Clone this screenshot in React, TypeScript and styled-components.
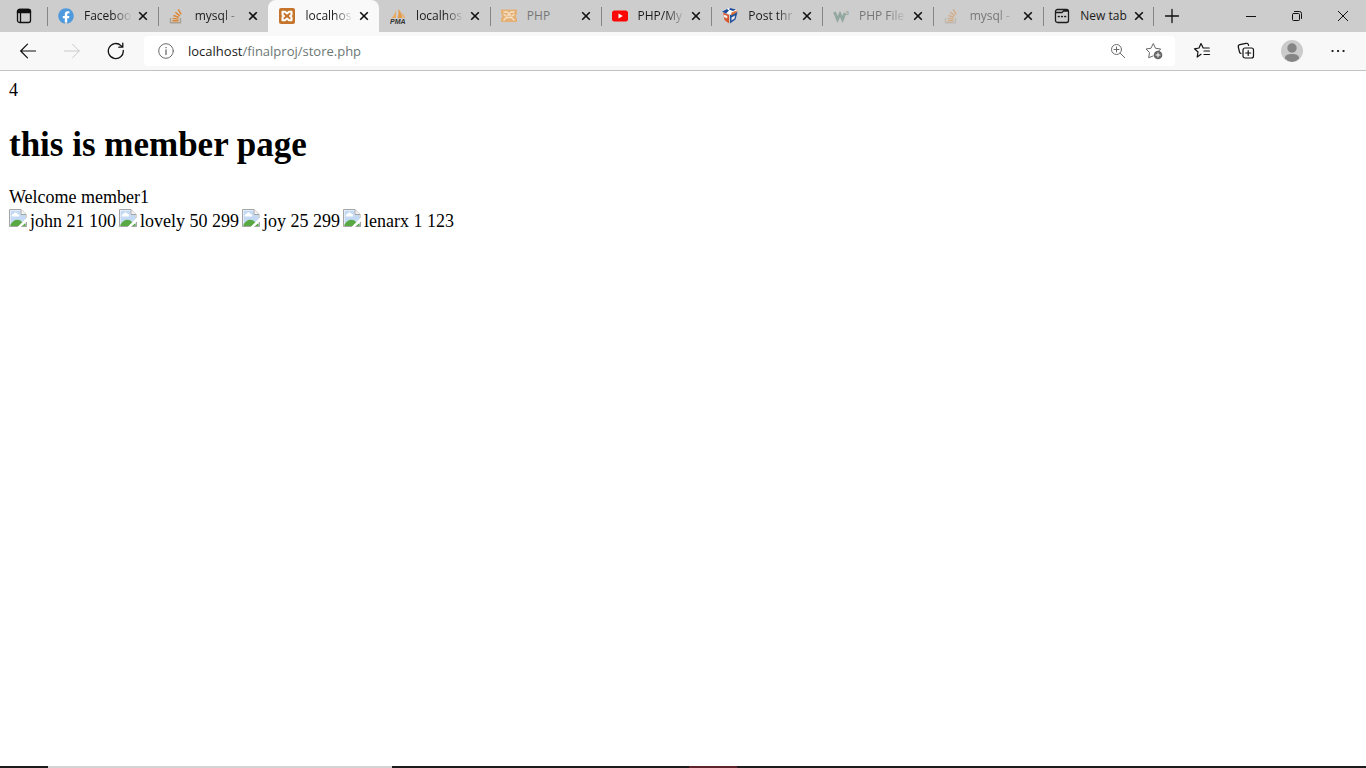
import React from "react";
import styled, { createGlobalStyle } from "styled-components";
import { FaFacebook } from "react-icons/fa";

const GlobalStyle = createGlobalStyle`
  * { box-sizing: border-box; }
  body { margin: 0; background: #fff; }
`;

const UI_FONT = `"Open Sans", "Noto Sans", sans-serif`;

const Window = styled.div`
  display: flex;
  flex-direction: column;
  min-height: 100vh;
  font-family: ${UI_FONT};
`;

const IconButton = styled.button<{ $width?: number; $color?: string }>`
  display: flex;
  align-items: center;
  justify-content: center;
  flex: none;
  width: ${(p) => p.$width ?? 44}px;
  height: 32px;
  padding: 0;
  border: 0;
  background: none;
  color: ${(p) => p.$color ?? "#111"};
  svg { display: block; }
`;

const TabBar = styled.header`
  display: flex;
  height: 32px;
  background: #cdcdcd;
`;

const TabList = styled.nav`
  display: flex;
  flex: 0 1 1107px;
  min-width: 0;
`;

const Tab = styled.div<{ $active?: boolean; $divider?: boolean }>`
  position: relative;
  display: flex;
  align-items: center;
  flex: 1 1 0;
  min-width: 0;
  padding: 0 10px 0 11px;
  border-radius: 8px 8px 0 0;
  background: ${(p) => (p.$active ? "#f9f9f9" : "transparent")};
  &::before,
  &:last-child::after {
    content: "";
    position: absolute;
    left: 0;
    top: 7px;
    width: 1px;
    height: 19px;
    background: ${(p) => (p.$divider ? "#858585" : "transparent")};
  }
  &:last-child::after {
    left: auto;
    right: 0;
  }
`;

const TabLink = styled.a<{ $dim?: boolean }>`
  display: flex;
  align-items: center;
  flex: 1;
  min-width: 0;
  gap: 10px;
  color: ${(p) => (p.$dim ? "#777" : "#1b1b1b")};
  font-size: 12px;
  line-height: 16px;
  text-decoration: none;
  svg { flex: none; display: block; }
`;

const TabTitle = styled.span<{ $fade: boolean }>`
  flex: 1;
  min-width: 0;
  margin-right: 6px;
  white-space: nowrap;
  mask-image: ${(p) => (p.$fade ? "linear-gradient(to right, #000 60%, transparent)" : "none")};
`;

const Spacer = styled.div`
  flex: 1;
`;

const Toolbar = styled.div`
  display: flex;
  align-items: center;
  height: 39px;
  padding: 0 6px;
  background: #f8f8f8;
  border-bottom: 1px solid #c2c2c2;
`;

const AddressBar = styled.div`
  display: flex;
  align-items: center;
  flex: 1;
  height: 30px;
  margin: 0 5px 0 6px;
  padding: 0 3px 0 0;
  border-radius: 4px;
  background: #fff;
`;

const Url = styled.label`
  position: relative;
  display: flex;
  flex: 1;
  min-width: 0;
  color: #6c7774;
  font-size: 13px;
  line-height: 20px;
  strong { color: #1b1b1b; font-weight: 400; }
`;

const UrlInput = styled.input`
  position: absolute;
  inset: 0;
  width: 100%;
  padding: 0;
  border: 0;
  outline: 0;
  background: transparent;
  font: inherit;
`;

const Page = styled.main`
  flex: 1;
  padding: 9px;
  color: #000;
  font: 18px/21px "Liberation Serif", "Times New Roman", serif;
`;

const Title = styled.h1`
  margin: 24px 0 22px;
  font-size: 35px;
  line-height: 40px;
`;

const Products = styled.div`
  display: flex;
  flex-wrap: wrap;
  gap: 3px;
  margin-top: 1px;
`;

const Product = styled.span`
  display: flex;
  align-items: flex-start;
  gap: 3px;
  line-height: 24px;
`;

const Taskbar = styled.footer`
  display: flex;
  height: 2px;
  background: #1e1b1c;
`;

const TaskSegment = styled.div<{ $width: number; $color: string }>`
  flex: none;
  width: ${(p) => p.$width}px;
  background: ${(p) => p.$color};
`;

type DrawProps = { size?: number; width?: number; children: React.ReactNode };
const Draw = ({ size = 16, width = 1, children }: DrawProps) => (
  <svg width={size} height={size} viewBox={`0 0 ${size} ${size}`} fill="none" stroke="currentColor"
    strokeWidth={width} strokeLinecap="round" strokeLinejoin="round" aria-hidden="true">{children}</svg>
);

const CloseIcon = () => (
  <Draw size={10} width={1.6}><path d="M1.2 1.2 8.8 8.8M8.8 1.2 1.2 8.8" strokeLinecap="butt" /></Draw>
);

const XamppIcon = () => (
  <Draw>
    <rect width="16" height="16" rx="2" fill="#c4752b" stroke="none" />
    <path d="M3.500 3.800h2.500L8 5.500l2-1.700h2.500v3L11 8l1.500 1.200v3H10L8 10.500l-2 1.700H3.500v-3L5 8 3.500 6.800Z" stroke="#fff" strokeWidth="2" />
  </Draw>
);

const PmaIcon = () => (
  <Draw>
    <path d="M6 2v8H1.500C3.500 8.500 5 5.500 6 2Z" fill="#e9aa62" stroke="none" />
    <path d="M8 1c3 2 4 5.500 4 9H7.500C8.700 7 9 4 8 1Z" fill="#e39b48" stroke="none" />
    <path d="M12 5c1.800 1.200 2.700 3 3 5h-2.500Z" fill="#e9b277" stroke="none" />
    <text x="0" y="15.500" fill="#333" stroke="none" fontFamily="Liberation Sans, sans-serif" fontSize="7" fontWeight="700" fontStyle="italic">PMA</text>
  </Draw>
);

const PhpIcon = () => (
  <Draw>
    <path d="M0 1.500h16v5h-1v3h1v4.500H0V9.500h1v-3H0Z" fill="#e5b075" stroke="none" />
    <path d="M3 4h3l2 1.500L10 4h3M3 6.500l2 1.500M13 6.500 11 8M3 12l2.500-2.500h5L13 12M6.500 7h3" stroke="#f6e2c8" strokeWidth="1.300" />
  </Draw>
);

const YoutubeIcon = () => (
  <Draw>
    <rect x="0" y="2.500" width="16" height="11" rx="2.500" fill="#fb0505" stroke="none" />
    <path d="M6.500 5.500v5L10.800 8Z" fill="#fff" stroke="none" />
  </Draw>
);

const CubeIcon = () => (
  <Draw>
    <path d="m1 4.500 6 2.500v8.500L2.500 12Z" fill="#d9562d" stroke="none" />
    <path d="m8 7 7.500-3L13.500 11.500 8 15.500Z" fill="#21529c" stroke="none" />
    <path d="m0 3 7-3 9 2L8.500 6.500Z" fill="#fff" stroke="none" />
    <path d="m0 3.500 5-2.500 2 1.500L4 5.500ZM8 0l6 1.500-3 1.500-4-1.500Z" fill="#1b4b98" stroke="none" />
    <path d="m9.500 4.500 6.500-2.500-3 3.500-4 2Z" fill="#df7133" stroke="none" />
    <path d="m1.500 6.500 4 1.500-.5 2.500-3-1.500ZM9.500 9.500l3.500-2-.5 3-3 2Z" fill="#f3eee9" stroke="none" />
  </Draw>
);

const W3Icon = () => (
  <Draw>
    <path d="m1.500 4 3 7.500L7 6l2.500 5.500L12 5" stroke="#92a7a0" strokeWidth="2.700" strokeLinejoin="miter" strokeLinecap="butt" />
    <text x="12.500" y="7" fill="#92a7a0" stroke="none" fontFamily="Liberation Sans, sans-serif" fontSize="6" fontWeight="700">3</text>
  </Draw>
);

const StackIcon = ({ dim }: { dim?: boolean }) => (
  <Draw width={1.4}>
    <g opacity={dim ? 0.45 : 1} strokeLinecap="butt">
      <path d="M1.500 10v4.800h10V10" stroke="#aaa08f" />
      <path d="M3.500 12.800h6M3.600 10.400l6 .7M4.500 7.500l5.500 1.900M6.400 4.200l4.500 3.700M9.200 1.300l3 5" stroke="#dd8533" />
    </g>
  </Draw>
);

const FacebookDisc = styled.span`
  display: flex;
  border-radius: 50%;
  background: radial-gradient(#fff 50%, transparent 55%);
`;

const FacebookIcon = () => <FacebookDisc><FaFacebook size={16} color="#4f9add" /></FacebookDisc>;

const NewTabIcon = () => (
  <Draw width={1.3}>
    <path d="M1.500 4V3.500a2 2 0 0 1 2-2h9a2 2 0 0 1 2 2v9a2 2 0 0 1-2 2h-9a2 2 0 0 1-2-2ZM1.500 4.500H8L9.500 3H14" />
    <path d="M4.500 8.500h.6M7.700 8.500h.6M10.900 8.500h.6" strokeWidth="1.700" />
  </Draw>
);

const BrokenImage = () => (
  <svg width="18" height="18" viewBox="0 0 18 18" role="img" aria-label="Product">
    <path d="M.5.500h11.500l5 5v12H.5Z" fill="#fff" stroke="#a5a5a5" />
    <path d="M1.500 1.500h10v4.500h5v11h-15Z" fill="#c4d9f4" />
    <path d="M3 7.500c-.8-1.500.3-2.500 1.500-2.500.5-2 3.500-2 4 0 1.500 0 2.300 1.500 1.300 2.500Z" fill="#fff" />
    <path d="M1.500 17v-1.500c3-5.500 8.500-6 11.500-2.500L16.500 15v2Z" fill="#58a944" />
    <path d="M12 .5v5h5" fill="#f4f4f4" stroke="#a5a5a5" />
    <path d="M18 8.500 8.500 18H12l6-5.500Z" fill="#fff" />
    <path d="M17.500 13v4.500h-5" fill="none" stroke="#a5a5a5" />
  </svg>
);

type TabData = { title: string; icon: React.ReactNode; active?: boolean; dim?: boolean; divider?: boolean; short?: boolean };
const tabs: TabData[] = [
  { title: "Faceboo", icon: <FacebookIcon />, divider: true },
  { title: "mysql -", icon: <StackIcon />, divider: true },
  { title: "localhos", icon: <XamppIcon />, active: true },
  { title: "localhos", icon: <PmaIcon /> },
  { title: "PHP", icon: <PhpIcon />, divider: true, dim: true, short: true },
  { title: "PHP/My", icon: <YoutubeIcon />, divider: true },
  { title: "Post thr", icon: <CubeIcon />, divider: true },
  { title: "PHP File", icon: <W3Icon />, divider: true, dim: true },
  { title: "mysql -", icon: <StackIcon dim />, divider: true, dim: true },
  { title: "New tab", icon: <NewTabIcon />, divider: true, short: true },
];

const products = ["john 21 100", "lovely 50 299", "joy 25 299", "lenarx 1 123"];

export default function App() {
  return (
    <Window>
      <GlobalStyle />
      <TabBar>
        <IconButton $width={47} aria-label="Tab actions">
          <Draw width={1.3}>
            <rect x="1.500" y="1.500" width="13" height="13" rx="2" />
            <path d="M1.500 3.500a2 2 0 0 1 2-2h9a2 2 0 0 1 2 2v1h-13Z" fill="currentColor" />
            <path d="M4.500 5v9" />
          </Draw>
        </IconButton>
        <TabList aria-label="Tabs">
          {tabs.map((t, i) => (
            <Tab key={i} $active={t.active} $divider={t.divider}>
              <TabLink href="#" $dim={t.dim}>
                {t.icon}
                <TabTitle $fade={!t.short}>{t.title}</TabTitle>
              </TabLink>
              <IconButton $width={10} aria-label={`Close ${t.title}`}><CloseIcon /></IconButton>
            </Tab>
          ))}
        </TabList>
        <IconButton $width={36} aria-label="New tab">
          <Draw width={1.3}><path d="M8 1.500v13M1.500 8h13" /></Draw>
        </IconButton>
        <Spacer />
        <IconButton $width={46} aria-label="Minimize"><Draw size={10}><path d="M0 5.500h10" /></Draw></IconButton>
        <IconButton $width={46} aria-label="Restore">
          <Draw size={10}><rect x=".5" y="2.500" width="7" height="7" rx="1" /><path d="M2.500.5h5a2 2 0 0 1 2 2v5" /></Draw>
        </IconButton>
        <IconButton $width={46} aria-label="Close"><Draw size={10}><path d="m0 0 10 10M10 0 0 10" /></Draw></IconButton>
      </TabBar>
      <Toolbar>
        <IconButton aria-label="Back"><Draw width={1.2}><path d="M15.500 8H.7M7.500 1.200.7 8l6.800 6.800" /></Draw></IconButton>
        <IconButton $color="#c9c9c9" aria-label="Forward"><Draw><path d="M.5 8h14.800M8.500 1.200 15.300 8l-6.800 6.800" /></Draw></IconButton>
        <IconButton aria-label="Refresh">
          <Draw size={18} width={1.3}><path d="M16.300 8.500A7.500 7.500 0 1 1 14 3.600l1.500 1.400M15.800 1.200v4h-4" /></Draw>
        </IconButton>
        <AddressBar>
          <IconButton $color="#6a6a6a" aria-label="Site information">
            <Draw><circle cx="8" cy="8" r="7.300" /><path d="M8 7v4.500M8 4.500v.2" strokeWidth="1.300" /></Draw>
          </IconButton>
          <Url>
            <span><strong>localhost</strong>/finalproj/store.php</span>
            <UrlInput aria-label="Address" />
          </Url>
          <IconButton $width={36} $color="#6a6a6a" aria-label="Zoom">
            <Draw><circle cx="6.500" cy="6.500" r="5" /><path d="m10.200 10.200 4.500 4.500M6.500 4v5M4 6.500h5" /></Draw>
          </IconButton>
          <IconButton $width={36} $color="#666" aria-label="Add to favorites">
            <Draw size={18}>
              <path d="M8 14 3.700 15.700l.8-5.200L1 7l4.900-.7L8.300 1.500l2.200 4.800 5.200.7-2 2" />
              <circle cx="13" cy="13" r="4.300" fill="#666" stroke="none" />
              <path d="M13 11v4M11 13h4" stroke="#fff" />
            </Draw>
          </IconButton>
        </AddressBar>
        <IconButton aria-label="Favorites">
          <Draw size={18} width={1.2}><path d="M8 12.300 4.200 15l.8-5L1.500 6.800 6 6l2-4.500L10.200 6h6M11 9h5.500M11 12.500h5.500" /></Draw>
        </IconButton>
        <IconButton aria-label="Collections">
          <Draw size={18} width={1.2}>
            <path d="M4 11.500A2 2 0 0 1 2.500 10L1.300 5A2 2 0 0 1 2.800 2.700L9 1.300a2 2 0 0 1 2.400 1.500l.2.700" />
            <rect x="6" y="6" width="10.500" height="10" rx="2" /><path d="M11.200 8.500v5M8.700 11h5" />
          </Draw>
        </IconButton>
        <IconButton $width={48} aria-label="Profile">
          <Draw size={22}>
            <circle cx="11" cy="11" r="11" fill="#cbcbcb" stroke="none" />
            <circle cx="11" cy="8" r="4.700" fill="#858585" stroke="none" />
            <path d="M3.800 18.500C4 15 7 14 11 14s7 1 7.200 4.500A11 11 0 0 1 11 22a11 11 0 0 1-7.200-3.500Z" fill="#858585" stroke="none" />
          </Draw>
        </IconButton>
        <IconButton aria-label="Settings and more">
          <Draw><path d="M2.500 8h.1M8 8h.1M13.500 8h.1" strokeWidth="2.200" /></Draw>
        </IconButton>
      </Toolbar>
      <Page>
        4
        <Title>this is member page</Title>
        <div>Welcome member1</div>
        <Products>
          {products.map((p) => <Product key={p}><BrokenImage />{p}</Product>)}
        </Products>
      </Page>
      <Taskbar>
        <TaskSegment $width={48} $color="#1e1b1c" />
        <TaskSegment $width={344} $color="#d4d4d4" />
        <TaskSegment $width={297} $color="#1e1b1c" />
        <TaskSegment $width={48} $color="#5d242b" />
      </Taskbar>
    </Window>
  );
}
